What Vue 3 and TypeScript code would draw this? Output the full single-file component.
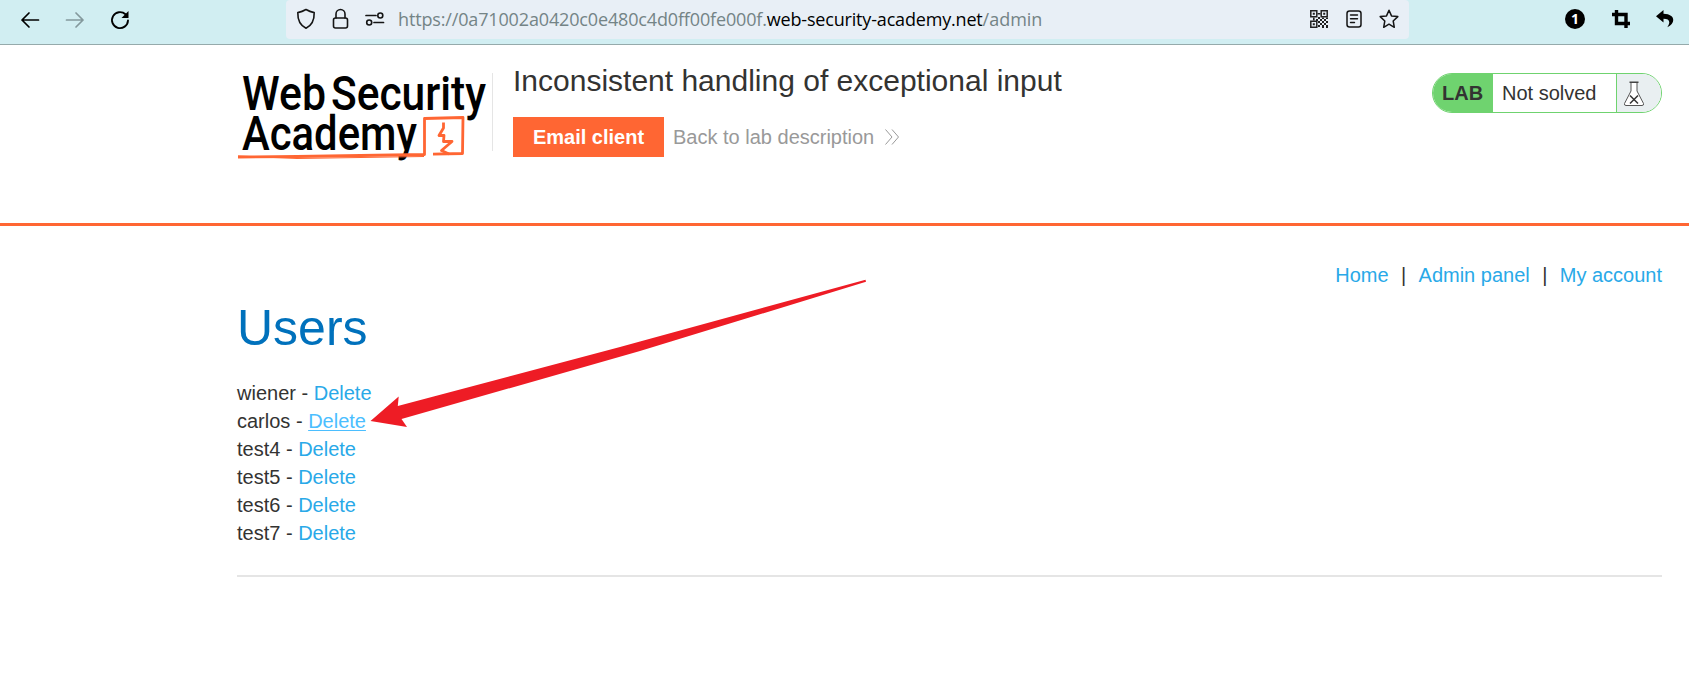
<script setup lang="ts">
interface User {
  name: string
  active?: boolean
}

const users: User[] = [
  { name: 'wiener' },
  { name: 'carlos', active: true },
  { name: 'test4' },
  { name: 'test5' },
  { name: 'test6' },
  { name: 'test7' },
]
const links: string[] = ['Home', 'Admin panel', 'My account']
</script>

<template>
  <div class="page">
    <header class="toolbar">
      <div class="nav-buttons">
        <svg width="20" height="20" viewBox="0 0 20 20" class="line">
          <path d="M18.500 10H2M9 3L2 10l7 7" stroke-width="1.700" />
        </svg>
        <svg width="20" height="20" viewBox="0 0 20 20" class="line faded">
          <path d="M1.500 10H18M11 3l7 7-7 7" stroke-width="1.700" />
        </svg>
        <svg width="20" height="20" viewBox="0 0 20 20" class="line">
          <path d="M15.500 4.300A8 8 0 1 0 18 10.500" stroke-width="1.900" />
          <path d="M18.500 1v7h-7z" fill="currentColor" stroke="none" />
        </svg>
      </div>
      <div class="address">
        <div class="site-icons">
          <svg width="20" height="22" viewBox="0 0 20 22" class="line">
            <path d="M10 1.500C7.500 3 5 4 1.800 4.600C1.600 12 3.500 17.200 10 20.300C16.500 17.200 18.400 12 18.200 4.600C15 4 12.500 3 10 1.500Z" stroke-width="1.600" />
          </svg>
          <svg width="17" height="22" viewBox="0 0 17 22" class="line">
            <rect x="1.500" y="10" width="14" height="10" rx="2" stroke-width="1.600" />
            <path d="M4 10V6a4.500 4.500 0 0 1 9 0v4" stroke-width="1.600" />
          </svg>
          <svg width="20" height="14" viewBox="0 0 20 14" class="line">
            <path d="M1 3.500h10M9 10.500h9.500" stroke-width="1.700" />
            <circle cx="15.300" cy="3.500" r="2.500" stroke-width="1.600" />
            <circle cx="4.200" cy="10.500" r="2.500" stroke-width="1.600" />
          </svg>
        </div>
        <div class="url"><span class="sub">https://0a71002a0420c0e480c4d0ff00fe000f.</span><span class="host">web-security-academy.net</span><span class="path">/admin</span></div>
        <div class="page-actions">
          <svg width="18" height="18" viewBox="0 0 18 18">
            <g fill="none" stroke="#222" stroke-width="1.500">
              <path d="M.8.8h6v6h-6zM11.200.8h6v6h-6zM.8 11.200h6v6h-6z" />
            </g>
            <path d="M2.800 2.800h2v2h-2zM13.200 2.800h2v2h-2zM2.800 13.200h2v2h-2zM7.500 3h3v1.600h-3zM3 7.500h1.600v3H3zM8 7h2v2H8zM6 9h2v2H6zM10 9h2v2h-2zM14 9h2v2h-2zM12 7.500h2V9h-2zM16 7.500h2V9h-2zM8 11h2v2H8zM12 11h2v2h-2zM16 11h2v2h-2zM10 13h2v2h-2zM14 13h2v2h-2zM8 15h2v2H8zM12 15h2v3h-2zM16 15h2v3h-2z" fill="#222" />
          </svg>
          <svg width="16" height="18" viewBox="0 0 16 18" class="line">
            <rect x="1" y="1" width="14" height="16" rx="2.500" stroke-width="1.500" />
            <path d="M4.500 5h7M4.500 8.700h7M4.500 12.500h4" stroke-width="1.400" />
          </svg>
          <svg width="20" height="20" viewBox="0 0 20 20" class="line">
            <path d="M10 1.300L12.500 6.900L18.800 7.600L14.200 12L15.300 18.300L10 15.200L4.700 18.300L5.800 12L1.200 7.600L7.500 6.900Z" stroke-width="1.500" />
          </svg>
        </div>
      </div>
      <div class="extensions">
        <span class="badge">1</span>
        <svg width="18" height="18" viewBox="0 0 18 18">
          <path d="M0 4.500h14v13.500M4.500 0v13.500h13.500" fill="none" stroke="#000" stroke-width="3.400" />
        </svg>
        <svg width="18" height="18" viewBox="0 0 18 18">
          <path d="M7.500 0L0 6.200L7.500 12.500V8.800C13 8.800 15.200 11.500 11.300 17.200C20 13 19.500 4 7.500 3.800Z" />
        </svg>
      </div>
    </header>

    <section class="lab-header">
      <svg class="logo" width="256" height="96" viewBox="0 0 256 96">
        <g class="logo-text">
          <text x="5" y="44.500" textLength="84" lengthAdjust="spacingAndGlyphs">Web</text>
          <text x="94" y="44.500" textLength="155" lengthAdjust="spacingAndGlyphs">Security</text>
          <text x="5" y="85" textLength="175" lengthAdjust="spacingAndGlyphs">Academy</text>
        </g>
        <path d="M1 92L60 91.500L187.500 89.500V53.500L226 52.500L225.500 88.500L196 89.200" class="sketch" />
        <path d="M1 91L60 93.500L187 91.500" class="sketch thin" />
        <path d="M206.500 57.500V63L202 70.500H207L206.500 76.500H215L204.500 85.500L212 89" class="sketch" />
      </svg>
      <div class="title-area">
        <h2>Inconsistent handling of exceptional input</h2>
        <div class="actions">
          <a class="button">Email client</a>
          <a class="back">Back to lab description</a>
          <svg class="chevrons" width="15" height="16" viewBox="0 0 15 16">
            <path d="M.5.5L7 8L.5 15.500M7 .5L13.500 8L7 15.500" fill="none" stroke="#999" />
          </svg>
        </div>
      </div>
      <div class="status">
        <strong>LAB</strong>
        <span class="state">Not solved</span>
        <span class="flask">
          <svg width="22" height="26" viewBox="0 0 22 26">
            <path d="M8 1.500V10L1.500 22.500Q1 24.500 3 24.500H19Q21 24.500 20.500 22.500L14 10V1.500Z" fill="#fff" stroke="#555" />
            <path d="M6.500 1.200h9" stroke="#444" stroke-width="1.400" />
            <path d="M7 14.500l8 8M15 14.500l-8 8" stroke="#333" stroke-width="1.500" />
          </svg>
        </span>
      </div>
    </section>

    <main>
      <nav>
        <template v-for="(link, i) in links" :key="link">
          <span v-if="i > 0" class="separator">|</span>
          <a>{{ link }}</a>
        </template>
      </nav>
      <h1>Users</h1>
      <ul>
        <li v-for="user in users" :key="user.name">
          {{ user.name }} - <a :class="{ hovered: user.active }">Delete</a>
        </li>
      </ul>
      <hr />
    </main>

    <svg class="arrow" width="500" height="152" viewBox="366 277 500 152">
      <path d="M370.500 421L398.700 396.500L397.800 406L620 347L640 341.500L865.500 279.800L866 281.800L640 351L401.500 419L407 427Z" fill="#ee1c25" />
    </svg>
  </div>
</template>

<style>
body {
  margin: 0;
  background: #fff;
}
</style>

<style scoped>
.page {
  position: relative;
  width: 1689px;
  height: 691px;
  overflow: hidden;
  color: #333332;
  font: 20px/28px "Liberation Sans", Arial, sans-serif;
}
svg {
  display: block;
  flex: none;
}
.toolbar {
  box-sizing: border-box;
  display: flex;
  height: 45px;
  border-bottom: 1px solid #95aaab;
  background: #d1eef2;
}
.line {
  color: #000;
  fill: none;
  stroke: currentColor;
  stroke-linecap: round;
  stroke-linejoin: round;
}
.faded {
  color: #84999d;
}
.nav-buttons {
  box-sizing: border-box;
  display: flex;
  gap: 25px;
  width: 286px;
  padding: 10px 0 0 20px;
}
.address {
  box-sizing: border-box;
  display: flex;
  width: 1123px;
  height: 39px;
  padding-left: 10px;
  border-radius: 4px;
  background: #e8eff6;
}
.address .line {
  color: #151515;
}
.site-icons {
  display: flex;
  align-items: center;
  gap: 16px;
  width: 102px;
  height: 38px;
}
.url {
  display: flex;
  width: 912px;
  color: #748486;
  font: 18px/38px "Open Sans", "Noto Sans", sans-serif;
  white-space: nowrap;
}
.sub {
  letter-spacing: -0.15px;
}
.host {
  color: #000;
  letter-spacing: -0.18px;
}
.page-actions {
  display: flex;
  align-items: center;
  gap: 17.5px;
  height: 38px;
}
.extensions {
  display: flex;
  align-items: center;
  gap: 26.500px;
  height: 38px;
  margin-left: 156px;
}
.badge {
  width: 20px;
  height: 20px;
  border-radius: 50%;
  background: #000;
  color: #fff;
  font: 700 14px/20px "Noto Sans", sans-serif;
  text-align: center;
}
.lab-header {
  box-sizing: border-box;
  display: flex;
  height: 181px;
  padding: 20px 27px 0 237px;
  border-bottom: 3px solid #ff6633;
}
.logo {
  margin-right: -1px;
  overflow: visible;
}
.logo-text {
  font: 500 48px Roboto, sans-serif;
  fill: #000;
}
.sketch {
  fill: none;
  stroke: #ff6633;
  stroke-width: 2.8;
  stroke-linejoin: round;
}
.thin {
  stroke-width: 1;
}
.title-area {
  box-sizing: border-box;
  height: 78px;
  margin-top: 8px;
  padding-left: 20px;
  border-left: 1px solid #e5e5e5;
}
h2 {
  margin: -10px 0 18px;
  font-weight: 400;
  font-size: 30px;
  line-height: 36px;
  white-space: nowrap;
}
.actions {
  display: flex;
  align-items: center;
}
.button {
  width: 151px;
  background: #ff6633;
  font-weight: 700;
  line-height: 40px;
  text-align: center;
}
.back {
  margin-left: 9px;
}
.chevrons {
  margin-left: 11px;
}
.status {
  box-sizing: border-box;
  display: flex;
  width: 230px;
  height: 40px;
  margin: 8px 0 0 auto;
  overflow: hidden;
  border: 1px solid #6fd36f;
  border-radius: 20px;
  line-height: 38px;
}
.status strong {
  width: 51px;
  padding-left: 9px;
  background: #6fd36f;
}
.state {
  width: 114px;
  padding-left: 9px;
}
.flask {
  flex: 1;
  padding: 7px 0 0 6px;
  border-left: 1px solid #6fd36f;
  background: #e9eff1;
}
main {
  padding: 35px 27px 0 237px;
}
nav {
  display: flex;
  justify-content: flex-end;
}
a {
  color: #29a9e8;
}
.button {
  color: #fff;
}
.back {
  color: #999;
}
.separator {
  width: 30px;
  text-align: center;
}
h1 {
  margin: 9px 0 20px;
  color: #0071bc;
  font-weight: 400;
  font-size: 50px;
  line-height: 61px;
}
ul {
  margin: 0;
  padding: 0;
  list-style: none;
}
.hovered {
  color: #4bbeff;
  text-decoration: underline 1px;
  text-underline-offset: 2px;
}
hr {
  height: 2px;
  margin: 28px 0 0;
  border: 0;
  background: #e5e5e5;
}
.arrow {
  position: absolute;
  top: 277px;
  left: 366px;
}
</style>
